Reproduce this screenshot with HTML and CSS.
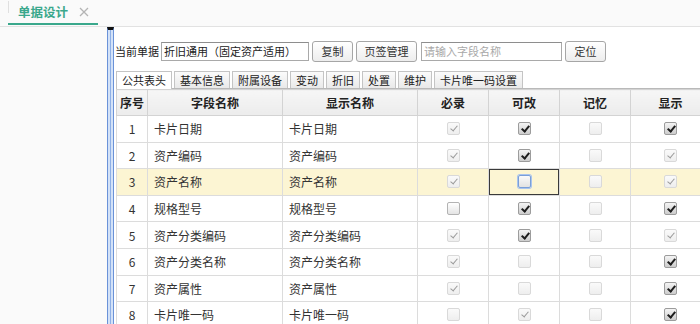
FILE: index.html
```html
<!DOCTYPE html>
<html>
<head>
    <meta charset="UTF-8">
    <title>单据设计</title>
    <link rel="stylesheet" href="styles.css">
</head>
<body>
    <div class="topbar">
        <div class="doc-tab">
            <span class="doc-title">单据设计</span>
            <svg class="close" width="10" height="10" viewBox="0 0 10 10">
                <path d="M1 1L9 9M9 1L1 9" stroke="#b4b4b4" stroke-width="1.3" fill="none"/>
            </svg>
        </div>
    </div>

    <div class="workspace">
        <div class="side"></div>
        <div class="splitter"></div>

        <div class="main">
            <div class="toolbar">
                <span class="label">当前单据</span>
                <input class="field doc" type="text" value="折旧通用（固定资产适用）">
                <button class="btn">复制</button>
                <button class="btn wide">页签管理</button>
                <input class="field search" type="text" placeholder="请输入字段名称">
                <button class="btn">定位</button>
            </div>

            <div class="tabs">
                <span class="tab active">公共表头</span>
                <span class="tab">基本信息</span>
                <span class="tab">附属设备</span>
                <span class="tab">变动</span>
                <span class="tab">折旧</span>
                <span class="tab">处置</span>
                <span class="tab">维护</span>
                <span class="tab">卡片唯一码设置</span>
            </div>

            <table class="grid">
                <colgroup>
                    <col class="c-no">
                    <col class="c-name">
                    <col class="c-name">
                    <col class="c-flag">
                    <col class="c-flag">
                    <col class="c-flag">
                    <col class="c-last">
                </colgroup>
                <thead>
                    <tr>
                        <th>序号</th>
                        <th>字段名称</th>
                        <th>显示名称</th>
                        <th>必录</th>
                        <th>可改</th>
                        <th>记忆</th>
                        <th>显示</th>
                    </tr>
                </thead>
                <tbody>
                    <tr>
                        <td class="no">1</td><td>卡片日期</td><td>卡片日期</td>
                        <td class="ck"><span class="cb dis on"></span></td>
                        <td class="ck"><span class="cb on"></span></td>
                        <td class="ck"><span class="cb dis"></span></td>
                        <td class="ck"><span class="cb on"></span></td>
                    </tr>
                    <tr>
                        <td class="no">2</td><td>资产编码</td><td>资产编码</td>
                        <td class="ck"><span class="cb dis on"></span></td>
                        <td class="ck"><span class="cb on"></span></td>
                        <td class="ck"><span class="cb dis"></span></td>
                        <td class="ck"><span class="cb dis on"></span></td>
                    </tr>
                    <tr class="current">
                        <td class="no">3</td><td>资产名称</td><td>资产名称</td>
                        <td class="ck"><span class="cb dis on"></span></td>
                        <td class="ck selected"><span class="cb focus"></span></td>
                        <td class="ck"><span class="cb dis"></span></td>
                        <td class="ck"><span class="cb dis on"></span></td>
                    </tr>
                    <tr>
                        <td class="no">4</td><td>规格型号</td><td>规格型号</td>
                        <td class="ck"><span class="cb"></span></td>
                        <td class="ck"><span class="cb on"></span></td>
                        <td class="ck"><span class="cb dis"></span></td>
                        <td class="ck"><span class="cb on"></span></td>
                    </tr>
                    <tr>
                        <td class="no">5</td><td>资产分类编码</td><td>资产分类编码</td>
                        <td class="ck"><span class="cb dis on"></span></td>
                        <td class="ck"><span class="cb on"></span></td>
                        <td class="ck"><span class="cb dis"></span></td>
                        <td class="ck"><span class="cb dis on"></span></td>
                    </tr>
                    <tr>
                        <td class="no">6</td><td>资产分类名称</td><td>资产分类名称</td>
                        <td class="ck"><span class="cb dis on"></span></td>
                        <td class="ck"><span class="cb dis"></span></td>
                        <td class="ck"><span class="cb dis"></span></td>
                        <td class="ck"><span class="cb on"></span></td>
                    </tr>
                    <tr>
                        <td class="no">7</td><td>资产属性</td><td>资产属性</td>
                        <td class="ck"><span class="cb dis on"></span></td>
                        <td class="ck"><span class="cb dis"></span></td>
                        <td class="ck"><span class="cb dis"></span></td>
                        <td class="ck"><span class="cb on"></span></td>
                    </tr>
                    <tr>
                        <td class="no">8</td><td>卡片唯一码</td><td>卡片唯一码</td>
                        <td class="ck"><span class="cb dis"></span></td>
                        <td class="ck"><span class="cb dis on"></span></td>
                        <td class="ck"><span class="cb dis"></span></td>
                        <td class="ck"><span class="cb on"></span></td>
                    </tr>
                </tbody>
            </table>
        </div>
    </div>
</body>
</html>
```

FILE: styles.css
```css
html, body {
    height: 100%;
}

body {
    margin: 0;
    padding: 0;
    overflow: hidden;
    background-color: #fafafa;
    font-family: "Noto Sans CJK SC", "Liberation Sans", sans-serif;
    font-size: 12px;
    color: #333;
}

/* top document tab bar */
.topbar {
    height: 26px;
    border-bottom: 1px solid #e2e2e2;
    background-color: #fafafa;
    display: flex;
    align-items: flex-end;
}

.doc-tab {
    margin-left: 8px;
    width: 90px;
    height: 25px;
    border-bottom: 2px solid #3aa88c;
    margin-bottom: 1px;
    display: flex;
    align-items: center;
    box-sizing: border-box;
    position: relative;
}

.doc-tab::before {
    content: "";
    position: absolute;
    left: 0;
    top: 1px;
    height: 12px;
    border-left: 1px solid #e0e0e0;
}

.doc-title {
    margin-left: 10px;
    font-size: 12.5px;
    font-weight: bold;
    color: #3aa88c;
}

.close {
    margin-left: 11px;
}

/* body area */
.workspace {
    display: flex;
    height: calc(100% - 27px);
}

.side {
    width: 107px;
    flex: none;
    background-color: #fafafa;
}

.splitter {
    width: 5px;
    flex: none;
    border-left: 1px solid #6a92d8;
    border-right: 1px solid #6a92d8;
    border-top: 3px solid #111;
    background: linear-gradient(to right, #d3e2f8 0, #d3e2f8 2px, #8fb0e6 2px, #8fb0e6 3px, #d3e2f8 3px);
}

.main {
    flex: 1;
    min-width: 0;
    padding: 13px 0 0 1px;
    background-color: #fff;
}

/* toolbar */
.toolbar {
    display: flex;
    align-items: center;
    height: 22px;
}

.label {
    font-size: 11px;
    color: #222;
    width: 46px;
}

.field {
    height: 19px;
    box-sizing: border-box;
    border: 1px solid #a9a9a9;
    border-top-color: #8e8e8e;
    padding: 0 2px;
    font-family: inherit;
    font-size: 11px;
    color: #222;
    background-color: #fff;
    outline: none;
}

.field.doc {
    width: 148px;
}

.field.search {
    width: 141px;
    margin-left: 4px;
}

.field::placeholder {
    color: #a8a8a8;
}

.btn {
    height: 21px;
    width: 41px;
    margin-left: 3px;
    padding: 0;
    border: 1px solid #a6a6a6;
    border-radius: 3px;
    background: linear-gradient(#ffffff, #ededed);
    font-family: inherit;
    font-size: 11px;
    color: #333;
}

.btn.wide {
    width: 61px;
    margin-left: 3px;
}

.field.search + .btn {
    margin-left: 3px;
}

/* sheet tabs */
.tabs {
    display: flex;
    margin: 9px 0 0 1px;
    height: 17px;
    border-bottom: 1px solid #b9b9b9;
}

.tab {
    font-size: 11px;
    line-height: 16px;
    padding: 0 5px;
    margin-right: 2px;
    border: 1px solid #c4c4c4;
    border-bottom: none;
    background: linear-gradient(#fbfbfb, #e9e9e9);
    color: #222;
}

.tab.active {
    background: #fff;
    height: 17px;
}

/* grid */
.grid {
    margin-left: 1px;
    border-collapse: collapse;
    table-layout: fixed;
    width: 594px;
}

.c-no { width: 31px; }
.c-name { width: 135px; }
.c-flag { width: 71px; }
.c-last { width: 80px; }

.grid th {
    height: 25px;
    padding: 0;
    background: linear-gradient(#f6f6f6, #ececec);
    border: 1px solid #d3d3d3;
    font-weight: bold;
    font-size: 12px;
    color: #222;
    text-align: center;
}

.grid td {
    height: 25.6px;
    padding: 0 0 0 6px;
    border: 1px solid #dcdcdc;
    font-size: 12px;
    color: #333;
    white-space: nowrap;
}

.grid td.no {
    padding: 0;
    text-align: center;
}

.grid td.ck {
    padding: 0;
    text-align: center;
    line-height: 0;
}

.grid tr.current td {
    background-color: #fcf5d3;
}

.grid td.selected {
    box-shadow: inset 0 0 0 1px #3a3a3a;
}

/* checkboxes */
.cb {
    display: inline-block;
    position: relative;
    width: 11px;
    height: 11px;
    border: 1px solid #b3b3b3;
    border-radius: 2px;
    background: linear-gradient(#ffffff, #e4e4e4);
    vertical-align: middle;
}

.cb.on {
    border-color: #9c9c9c;
    background: linear-gradient(#f4f4f4, #cdcdcd);
}

.cb.on::after {
    content: "";
    position: absolute;
    left: 4px;
    top: 1px;
    width: 3px;
    height: 6px;
    border-right: 2px solid #1e1e1e;
    border-bottom: 2px solid #1e1e1e;
    transform: rotate(40deg);
}

.cb.dis {
    border-color: #d9d9d9;
    background: linear-gradient(#fafafa, #eeeeee);
}

.cb.dis.on::after {
    border-right: 1.5px solid #9a9a9a;
    border-bottom: 1.5px solid #9a9a9a;
}

.cb.focus {
    border-color: #7a9fd8;
    box-shadow: 0 0 0 1px #a9c4ee;
    background: linear-gradient(#fafafa, #e2e2e2);
}
```
